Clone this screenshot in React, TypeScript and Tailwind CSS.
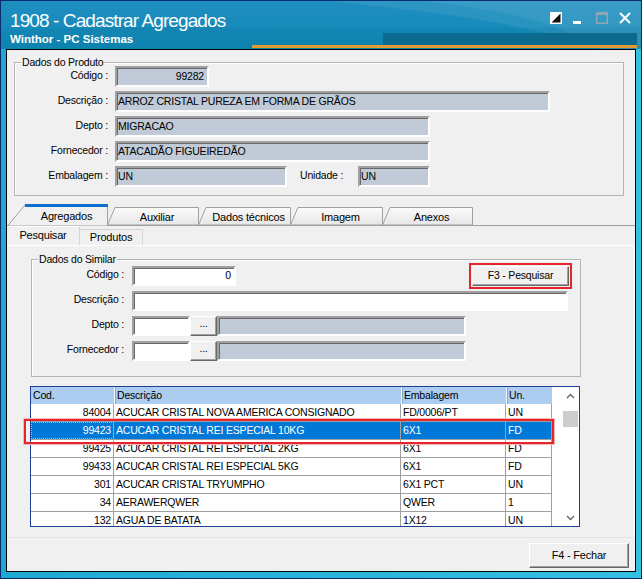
import type { ReactNode } from 'react';

const produto = {
  codigo: '99282',
  descricao: 'ARROZ  CRISTAL PUREZA EM FORMA DE GRÃOS',
  depto: 'MIGRACAO',
  fornecedor: 'ATACADÃO FIGUEIREDÃO',
  embalagem: 'UN',
  unidade: 'UN',
};

const rows = [
  { cod: '84004', desc: 'ACUCAR CRISTAL NOVA AMERICA CONSIGNADO', emb: 'FD/0006/PT', un: 'UN' },
  { cod: '99423', desc: 'ACUCAR CRISTAL REI ESPECIAL 10KG', emb: '6X1', un: 'FD', sel: true },
  { cod: '99425', desc: 'ACUCAR CRISTAL REI ESPECIAL 2KG', emb: '6X1', un: 'FD' },
  { cod: '99433', desc: 'ACUCAR CRISTAL REI ESPECIAL 5KG', emb: '6X1', un: 'FD' },
  { cod: '301', desc: 'ACUCAR CRISTAL TRYUMPHO', emb: '6X1 PCT', un: 'UN' },
  { cod: '34', desc: 'AERAWERQWER', emb: 'QWER', un: '1' },
  { cod: '132', desc: 'AGUA DE BATATA', emb: '1X12', un: 'UN' },
];

const tabs = [
  { label: 'Agregados', w: 101, slant: 18, active: true },
  { label: 'Auxiliar', w: 92, slant: 8 },
  { label: 'Dados técnicos', w: 93, slant: 8 },
  { label: 'Imagem', w: 93, slant: 8 },
  { label: 'Anexos', w: 91, slant: 8 },
];

// campo rebaixado estilo Windows clássico
const Field = ({
  w,
  value,
  ro,
  right,
}: {
  w: string;
  value?: string;
  ro?: boolean;
  right?: boolean;
}) => (
  <div
    className={`flex h-full items-center border-2 border-t-[#a0a0a0] border-l-[#a0a0a0] border-r-white border-b-white shadow-[inset_1px_1px_0_#696969] ${w} ${
      ro ? 'bg-[#c0cbd7]' : 'bg-white'
    } ${right ? 'justify-end pr-[3px]' : 'pl-[1px]'}`}
  >
    {value}
  </div>
);

const Raised = ({ className, children }: { className: string; children: ReactNode }) => (
  <div
    className={`flex items-center justify-center border border-t-white border-l-white border-r-[#696969] border-b-[#696969] bg-[#f0f0f0] shadow-[inset_-1px_-1px_0_#a0a0a0] ${className}`}
  >
    {children}
  </div>
);

const GroupBox = ({
  label,
  className,
  children,
}: {
  label: string;
  className: string;
  children: ReactNode;
}) => (
  <div className={`relative border border-[#b4b4b4] shadow-[inset_1px_1px_0_#fff] ${className}`}>
    <span className="absolute -top-[7px] left-[6px] bg-[#f0f0f0] px-px leading-[12px]">{label}</span>
    {children}
  </div>
);

const TitleBar = () => (
  <div className="relative h-[48px] overflow-hidden bg-[linear-gradient(to_bottom,#1f8ec0,#0f88b6)] text-white">
    <svg className="absolute inset-0" width="640" height="48" viewBox="0 0 640 48">
      <path d="M330 0 C 420 10, 520 20, 600 48 L 640 48 L 640 0 Z" fill="#ffffff" opacity="0.07" />
      <path d="M420 0 C 500 8, 560 22, 600 48 L 640 48 L 640 0 Z" fill="#ffffff" opacity="0.06" />
      <path d="M0 30 C 150 22, 300 30, 640 26 L 640 48 L 0 48 Z" fill="#0a5f86" opacity="0.12" />
    </svg>
    <div className="absolute left-[382px] right-[4px] top-[32px] h-[12px] bg-[#0b6a8e]" />
    <div className="absolute left-[251px] right-[4px] top-[44px] h-[3px] bg-[#e29a34]" />
    <div className="relative pl-[9px] pt-[8px] text-[19px] leading-[23px] tracking-[-0.9px]">
      1908 - Cadastrar Agregados
    </div>
    <div className="relative pl-[9px] text-[11.5px] font-bold leading-[14px] tracking-normal">
      Winthor - PC Sistemas
    </div>
    <svg className="absolute left-[549px] top-[11px]" width="12" height="12" viewBox="0 0 12 12">
      <rect x="0.75" y="0.75" width="10.5" height="10.5" fill="#111" stroke="#fff" strokeWidth="1.5" />
      <polygon points="0,0 12,0 0,12" fill="#fff" />
    </svg>
    <div className="absolute left-[572px] top-[20px] h-[3px] w-[8px] bg-white" />
    <svg className="absolute left-[595px] top-[11px]" width="12" height="12" viewBox="0 0 12 12">
      <rect x="0.75" y="0.75" width="10.5" height="10.5" fill="none" stroke="#8fa7b4" strokeWidth="1.5" />
      <rect x="0" y="0" width="12" height="3" fill="#8fa7b4" />
    </svg>
    <svg className="absolute left-[618px] top-[11px]" width="12" height="12" viewBox="0 0 12 12">
      <path d="M1 1 L11 11 M11 1 L1 11" stroke="#fff" strokeWidth="2" />
    </svg>
  </div>
);

const Tab = ({ label, w, slant, active }: { label: string; w: number; slant: number; active?: boolean }) => (
  <div
    className={`relative -mr-px flex h-[21px] shrink-0 items-center justify-center ${
      active ? 'z-10 -mb-px h-[22px]' : ''
    }`}
    style={{ width: w, paddingLeft: slant }}
  >
    <svg className="absolute inset-0" width={w} height={active ? 22 : 21}>
      <defs>
        <linearGradient id="tabg" x1="0" y1="0" x2="0" y2="1">
          <stop offset="0" stopColor="#fbfbfb" />
          <stop offset="1" stopColor="#e6e6e6" />
        </linearGradient>
      </defs>
      {active ? (
        <>
          <polygon points={`0.5,22 ${slant},1 ${w - 0.5},1 ${w - 0.5},22`} fill="#f0f0f0" stroke="#a0a0a0" />
          <rect x={slant} y="0" width={w - slant} height="3" fill="#0a6fcf" />
        </>
      ) : (
        <polygon points={`0.5,21 ${slant},3.5 ${w - 0.5},3.5 ${w - 0.5},21`} fill="url(#tabg)" stroke="#a0a0a0" />
      )}
    </svg>
    <span className={`relative text-[11px] ${active ? 'pt-[3px]' : 'pt-[5px]'}`}>{label}</span>
  </div>
);

const Chevron = ({ up }: { up?: boolean }) => (
  <svg width="9" height="6" viewBox="0 0 9 6">
    <path d={up ? 'M1 5 L4.5 1.5 L8 5' : 'M1 1 L4.5 4.5 L8 1'} fill="none" stroke="#606060" strokeWidth="1.3" />
  </svg>
);

const ProdutoRow = ({ label, children }: { label: string; children: ReactNode }) => (
  <div className="flex h-[21px] items-center">
    <div className="w-[93px] pb-[2px] text-right">{label}</div>
    <div className="ml-[7px] flex h-full items-center">{children}</div>
  </div>
);

const SimilarRow = ({ label, children }: { label: string; children: ReactNode }) => (
  <div className="flex h-[20px] items-center">
    <div className="w-[92px] pb-[2px] text-right">{label}</div>
    <div className="ml-[8px] flex h-full flex-1 items-center">{children}</div>
  </div>
);

const cols = 'grid grid-cols-[83px_287px_105px_46px]';

export default function App() {
  return (
    <div className="flex h-[579px] w-[642px] flex-col bg-[#0a2b70] p-px font-['Liberation_Sans',Arial,sans-serif] text-[10.5px] tracking-[-0.2px] text-black">
      <div className="flex flex-1 flex-col bg-[linear-gradient(to_right,#1fa9d2,#35bfe0)]">
        <TitleBar />
        <div className="mx-[5px] mb-[6px] flex flex-1 flex-col border border-black bg-[#f0f0f0]">
          <GroupBox label="Dados do Produto" className="ml-[7px] mt-[12px] h-[134px] w-[610px]">
            <div className="flex flex-col gap-[4px] pt-[3px]">
              <ProdutoRow label="Código :">
                <Field w="w-[94px]" value={produto.codigo} ro right />
              </ProdutoRow>
              <ProdutoRow label="Descrição :">
                <Field w="w-[435px]" value={produto.descricao} ro />
              </ProdutoRow>
              <ProdutoRow label="Depto :">
                <Field w="w-[315px]" value={produto.depto} ro />
              </ProdutoRow>
              <ProdutoRow label="Fornecedor :">
                <Field w="w-[315px]" value={produto.fornecedor} ro />
              </ProdutoRow>
              <ProdutoRow label="Embalagem :">
                <Field w="w-[172px]" value={produto.embalagem} ro />
                <span className="ml-[13px] w-[58px] pb-[2px]">Unidade :</span>
                <Field w="w-[72px]" value={produto.unidade} ro />
              </ProdutoRow>
            </div>
          </GroupBox>

          <div className="mt-[9px] flex h-[21px] items-end border-b border-[#a0a0a0]">
            {tabs.map((t) => (
              <Tab key={t.label} {...t} />
            ))}
          </div>

          <div className="flex h-[19px] items-end">
            <div className="flex h-[19px] w-[73px] items-center justify-center border-t border-r border-t-white border-r-[#d4d4d4] bg-[#f0f0f0] pb-[1px] text-[11px]">
              Pesquisar
            </div>
            <div className="flex h-[16px] w-[63px] items-center justify-center border-t border-r border-[#d4d4d4] bg-[#f0f0f0] text-[11px]">
              Produtos
            </div>
          </div>

          <div className="flex h-[293px] flex-col border-t border-r border-b border-t-white border-r-white border-b-[#e3e3e3]">
            <GroupBox label="Dados do Similar" className="ml-[24px] mt-[13px] h-[118px] w-[550px]">
              <div className="flex flex-col gap-[5px] pt-[6px]">
                <SimilarRow label="Código :">
                  <Field w="w-[104px]" value="0" right />
                  <div className="-my-[3px] ml-[233px] h-[26px] w-[103px] border-2 border-[#e3262c] p-px">
                    <Raised className="h-full w-full">F3 - Pesquisar</Raised>
                  </div>
                </SimilarRow>
                <SimilarRow label="Descrição :">
                  <Field w="w-[436px]" />
                </SimilarRow>
                <SimilarRow label="Depto :">
                  <Field w="w-[58px]" />
                  <Raised className="h-full w-[27px] pb-[4px]">...</Raised>
                  <Field w="w-[249px]" ro />
                </SimilarRow>
                <SimilarRow label="Fornecedor :">
                  <Field w="w-[58px]" />
                  <Raised className="h-full w-[27px] pb-[4px]">...</Raised>
                  <Field w="w-[249px]" ro />
                </SimilarRow>
              </div>
            </GroupBox>

            <div className="relative ml-[23px] mt-[9px] flex h-[141px] w-[550px] border border-[#1d3f95] bg-white">
              <div className="h-full w-[521px] overflow-hidden">
                <div className={`${cols} h-[17px] bg-[#acccf0]`}>
                  {['Cod.', 'Descrição', 'Embalagem', 'Un.'].map((h, i) => (
                    <div
                      key={h}
                      className={`flex items-center pl-[2px] ${i > 0 ? 'border-l border-l-[#f4f8fd] shadow-[inset_1px_0_0_#8aa7cc]' : ''}`}
                    >
                      {h}
                    </div>
                  ))}
                </div>
                {rows.map((r) => (
                  <div
                    key={r.cod}
                    className={`${cols} h-[18px] border-b border-[#a0a0a0] ${r.sel ? 'bg-[#0078d7] text-white' : ''}`}
                  >
                    <div
                      className={`flex items-center justify-end border-r border-[#a0a0a0] pr-[2px] ${
                        r.sel ? 'outline-1 -outline-offset-1 outline-dotted outline-[#d8b060]' : ''
                      }`}
                    >
                      {r.cod}
                    </div>
                    <div className="flex items-center border-r border-[#a0a0a0] pl-[2px]">{r.desc}</div>
                    <div className="flex items-center border-r border-[#a0a0a0] pl-[2px]">{r.emb}</div>
                    <div className="flex items-center border-r border-[#a0a0a0] pl-[2px]">{r.un}</div>
                  </div>
                ))}
              </div>
              <div className="ml-auto flex w-[18px] flex-col items-center">
                <div className="flex h-[17px] items-center">
                  <Chevron up />
                </div>
                <div className="mt-[7px] h-[16px] w-[15px] bg-[#cdcdcd]" />
                <div className="mt-auto flex h-[17px] items-center">
                  <Chevron />
                </div>
              </div>
              <div className="absolute -left-[7px] top-[32px] h-[25px] w-[530px] border-2 border-[#e3262c] shadow-[0_0_0_1px_#f7b7b9]" />
            </div>
          </div>

          <div className="flex flex-1 justify-end pr-[6px] pt-[5px]">
            <Raised className="h-[25px] w-[100px] text-[11px]">F4 - Fechar</Raised>
          </div>
        </div>
      </div>
    </div>
  );
}
